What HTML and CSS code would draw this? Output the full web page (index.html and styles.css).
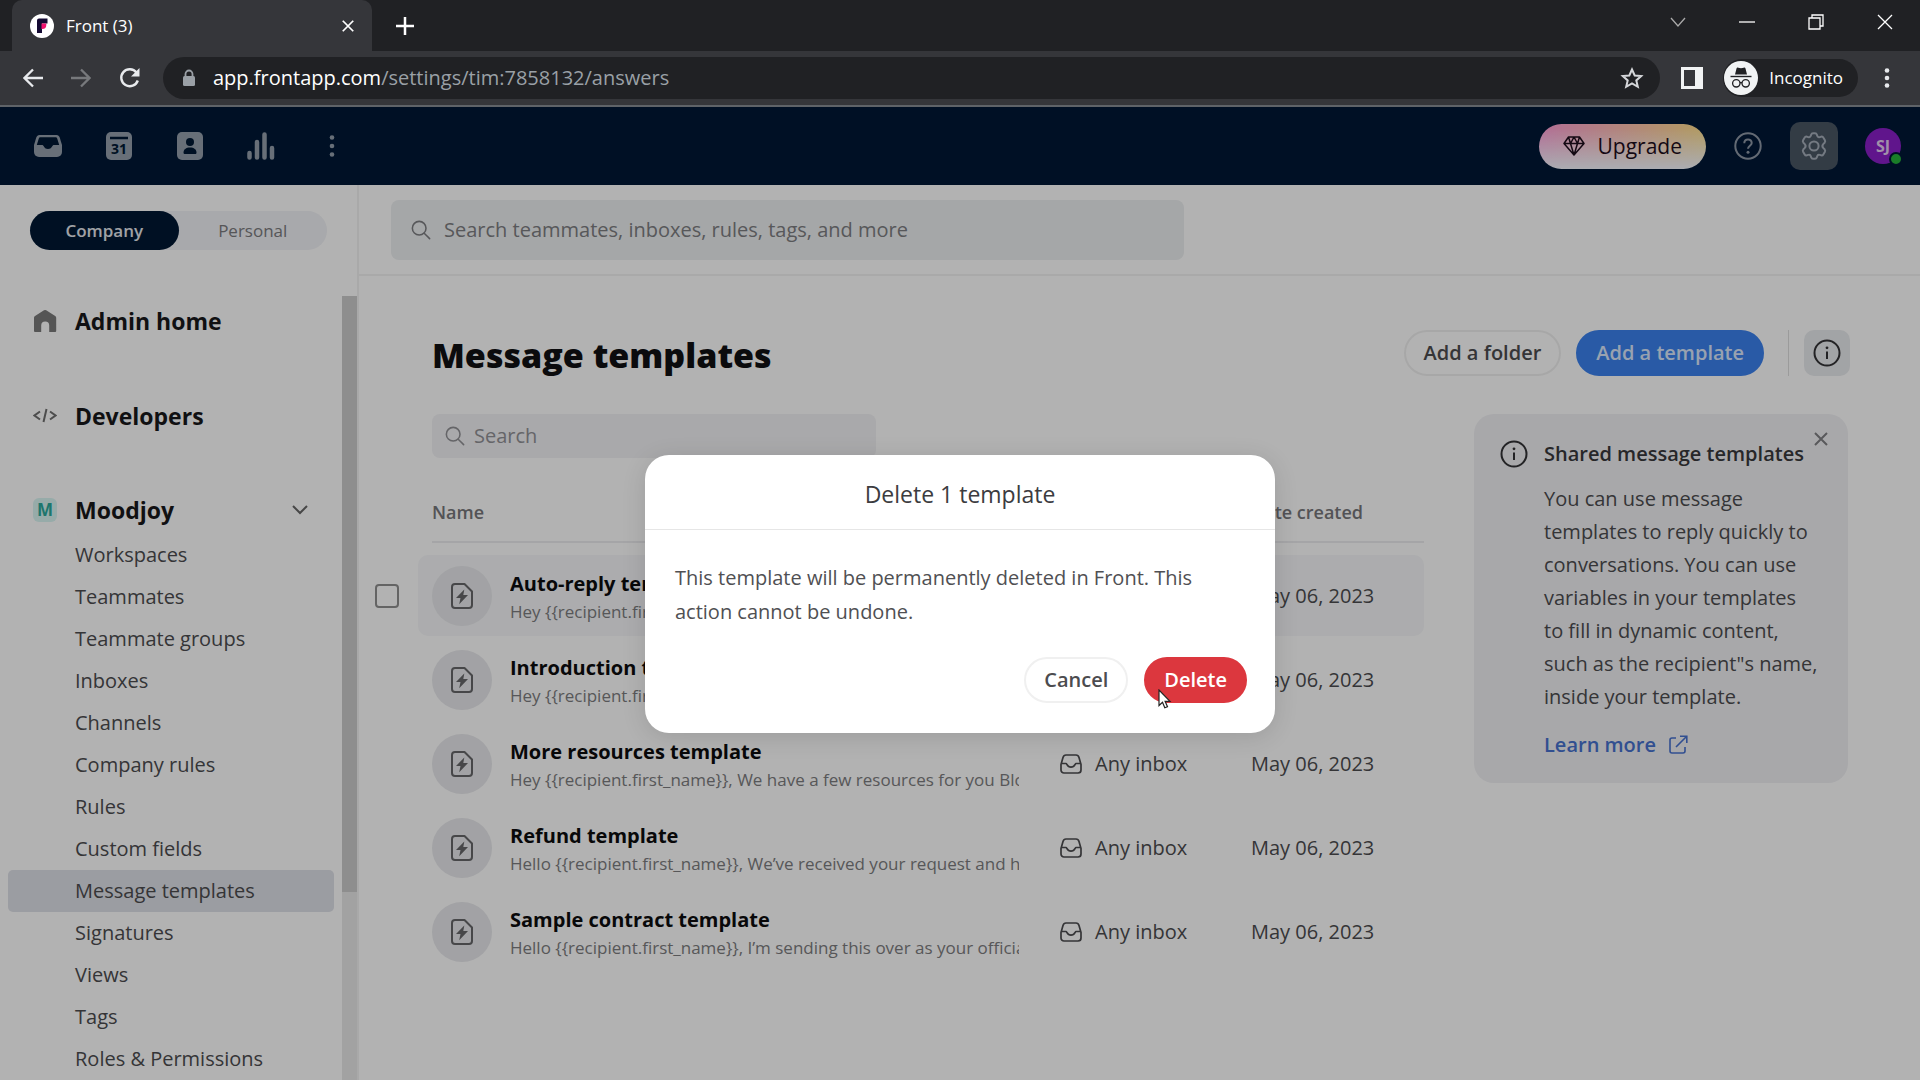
FILE: index.html
```html
<!DOCTYPE html>
<html lang="en">
<head>
<meta charset="utf-8">
<title>Front (3)</title>
<link rel="stylesheet" href="styles.css">
</head>
<body>
<svg class="sprite" aria-hidden="true">
  <symbol id="i-template" viewBox="0 0 24 28"><path d="M5 2h9.500l7.500 7.500V23a3 3 0 0 1-3 3H5a3 3 0 0 1-3-3V5a3 3 0 0 1 3-3z" fill="none" stroke="currentColor" stroke-width="2" stroke-linejoin="round"/><path d="M14.300 7.500 6 16h4.500l-1.300 6.200L18 13h-4.700z" fill="currentColor"/></symbol>
  <symbol id="i-inbox" viewBox="0 0 22 20"><path d="M1 10.500 3 3.400C3.400 2 4.500 1 6 1h10c1.500 0 2.600 1 3 2.400l2 7.100V16a3 3 0 0 1-3 3H4a3 3 0 0 1-3-3zM1.200 9.500H6c1 0 1 3.700 5 3.700s4-3.700 5-3.700h4.800" fill="none" stroke="currentColor" stroke-width="1.700" stroke-linejoin="round"/></symbol>
  <symbol id="i-search" viewBox="0 0 22 22"><circle cx="9" cy="9" r="7.500" fill="none" stroke="currentColor" stroke-width="1.700"/><path d="m14.500 14.500 6 6" stroke="currentColor" stroke-width="1.700" stroke-linecap="round"/></symbol>
  <symbol id="i-info" viewBox="0 0 28 28"><circle cx="14" cy="14" r="12.500" fill="none" stroke="currentColor" stroke-width="2"/><path d="M14 12.500V20" stroke="currentColor" stroke-width="2"/><circle cx="14" cy="8.800" r="1.400" fill="currentColor"/></symbol>
  <symbol id="i-close" viewBox="0 0 16 16"><path d="M2 2l12 12M14 2 2 14" stroke="currentColor" stroke-width="2"/></symbol>
</svg>

<header class="browser">
  <div class="tabs">
    <div class="tab">
      <svg class="favicon" viewBox="0 0 24 24"><circle cx="12" cy="12" r="12" fill="#fff"/><path d="M7 6.500A2 2 0 0 1 9 4.500h8.500v5H12V19H7z" fill="#140a33"/><path d="M11.500 9.500h4.800v1.500a4 4 0 0 1-4 4h-.8z" fill="#f0106e"/></svg>
      <span class="tab-title">Front (3)</span>
      <button class="plain" aria-label="Close tab"><svg width="14" height="14"><use href="#i-close"/></svg></button>
    </div>
    <button class="plain new-tab" aria-label="New tab"><svg width="18" height="18" viewBox="0 0 18 18"><path d="M9 0v18M0 9h18" stroke="#fff" stroke-width="2.500"/></svg></button>
    <div class="window-buttons">
      <button class="plain" aria-label="Search tabs"><svg width="16" height="10" viewBox="0 0 16 10"><path d="m1 1 7 8 7-8" fill="none" stroke="#aaa" stroke-width="1.300"/></svg></button>
      <button class="plain" aria-label="Minimize"><svg width="16" height="16" viewBox="0 0 16 16"><path d="M0 8h16" stroke="#fff" stroke-width="1.300"/></svg></button>
      <button class="plain" aria-label="Restore"><svg width="16" height="16" viewBox="0 0 16 16"><path d="M1 4h11v11H1zM4 4V1h11v11h-3" fill="none" stroke="#fff" stroke-width="1.300"/></svg></button>
      <button class="plain" aria-label="Close window"><svg width="16" height="16" viewBox="0 0 16 16"><path d="m1 1 14 14M15 1 1 15" stroke="#fff" stroke-width="1.300"/></svg></button>
    </div>
  </div>
  <div class="toolbar">
    <div class="nav-buttons">
      <button class="plain" aria-label="Back"><svg width="20" height="20" viewBox="0 0 20 20"><path d="M20 10H2M10 1.500 1.500 10l8.500 8.500" fill="none" stroke="#e8eaed" stroke-width="2.300"/></svg></button>
      <button class="plain" aria-label="Forward"><svg width="20" height="20" viewBox="0 0 20 20"><path d="M0 10h18M10 1.500l8.500 8.500-8.500 8.500" fill="none" stroke="#77797c" stroke-width="2.300"/></svg></button>
      <button class="plain" aria-label="Reload"><svg width="22" height="22" viewBox="0 0 22 22"><path d="M18.800 13.500A8.500 8.500 0 1 1 17.500 5.500" fill="none" stroke="#e8eaed" stroke-width="2.400"/><path d="M20.500 1v8.500H12z" fill="#e8eaed"/></svg></button>
    </div>
    <div class="address">
      <svg width="14" height="18" viewBox="0 0 14 18"><path d="M3.500 8V5a3.500 3.500 0 0 1 7 0v3" fill="none" stroke="#9aa0a6" stroke-width="1.800"/><rect x="1" y="7" width="12" height="10" rx="1.500" fill="#9aa0a6"/></svg>
      <span class="url"><b>app.frontapp.com</b>/settings/tim:7858132/answers</span>
      <svg width="24" height="22" viewBox="0 0 24 22"><path d="m12 2.500 2.700 6 6.500.6-4.900 4.300 1.500 6.400L12 16.400l-5.800 3.400 1.500-6.400-4.900-4.300 6.500-.6z" fill="none" stroke="#d5d7da" stroke-width="2"/></svg>
    </div>
    <svg width="22" height="22" viewBox="0 0 22 22"><path d="M0 0h22v22H0zM3 3v16h11V3z" fill="#f1f3f4" fill-rule="evenodd"/></svg>
    <div class="incognito">
      <svg width="34" height="34" viewBox="0 0 34 34"><circle cx="17" cy="17" r="17" fill="#f1f3f4"/><path d="M12.500 7.500c.3-1 1-1 1.800-.8l2.700.5 2.700-.5c.8-.2 1.500-.2 1.800.8l1.500 6h-12z" fill="#202124"/><path d="M6.500 15.500h21" stroke="#202124" stroke-width="1.400"/><circle cx="12.300" cy="22.300" r="3.700" fill="none" stroke="#202124" stroke-width="1.300"/><circle cx="21.700" cy="22.300" r="3.700" fill="none" stroke="#202124" stroke-width="1.300"/><path d="M16 22q1-1 2 0" fill="none" stroke="#202124" stroke-width="1.300"/></svg>
      <span>Incognito</span>
    </div>
    <button class="plain" aria-label="Menu"><svg width="6" height="20" viewBox="0 0 6 20"><g fill="#e8eaed"><circle cx="3" cy="2.500" r="2.300"/><circle cx="3" cy="10" r="2.300"/><circle cx="3" cy="17.500" r="2.300"/></g></svg></button>
  </div>
</header>

<div class="app">
  <nav class="topnav">
    <div class="apps">
      <a href="#" aria-label="Inbox"><svg width="30" height="28" viewBox="0 0 30 28"><path d="M6.500 3h17c1.600 0 2.700 1 3.200 2.500L29 13v7a5 5 0 0 1-5 5H6a5 5 0 0 1-5-5v-7l2.300-7.500C3.800 4 4.900 3 6.500 3z" fill="#95a0ad"/><path d="M7.300 5.300h15.400c.8 0 1.300.4 1.500 1.100l2 6.600h-5.700c-1.300 0-1.500 4-5.500 4s-4.200-4-5.500-4H3.800l2-6.600c.2-.7.700-1.100 1.500-1.100z" fill="#001833"/></svg></a>
      <a href="#" aria-label="Calendar"><svg width="26" height="28" viewBox="0 0 26 28"><rect width="26" height="28" rx="5" fill="#95a0ad"/><path d="M4 6h18" stroke="#001833" stroke-width="2.500"/><text x="13" y="22" class="cal-day">31</text></svg></a>
      <a href="#" aria-label="Contacts"><svg width="26" height="28" viewBox="0 0 26 28"><rect width="26" height="28" rx="5" fill="#95a0ad"/><circle cx="13" cy="10" r="4" fill="#001833"/><path d="M6.500 20.500c0-3 2.500-5 6.500-5s6.500 2 6.500 5c0 1-.5 1.500-1.500 1.500H8c-1 0-1.500-.5-1.500-1.500z" fill="#001833"/></svg></a>
      <a href="#" aria-label="Analytics"><svg width="28" height="28" viewBox="0 0 28 28"><path d="M2.500 21v4.500M10 10v15.500M17.500 2.500v23M25 16v9.500" stroke="#95a0ad" stroke-width="4.500" stroke-linecap="round"/></svg></a>
      <a href="#" aria-label="More"><svg width="6" height="22" viewBox="0 0 6 22"><g fill="#95a0ad"><circle cx="3" cy="2.500" r="2.300"/><circle cx="3" cy="11" r="2.300"/><circle cx="3" cy="19.500" r="2.300"/></g></svg></a>
    </div>
    <div class="account">
      <button class="upgrade"><svg width="22" height="20" viewBox="0 0 22 20"><path d="M5.500 1h11L21 7.500 11 19 1 7.500zM1 7.500h20M5.500 1l2 6.500L11 19l3.500-11.500 2-6.500M7.500 7.500 11 1l3.500 6.500" fill="none" stroke="#1e0e1c" stroke-width="1.500" stroke-linejoin="round"/></svg>Upgrade</button>
      <a href="#" aria-label="Help"><svg width="28" height="28" viewBox="0 0 28 28"><circle cx="14" cy="14" r="12.700" fill="none" stroke="#8f99a7" stroke-width="2"/><path d="M10.300 11.200C10.300 8.800 12 7.400 14 7.400s3.700 1.400 3.700 3.500c0 2.700-3.700 3-3.700 5.900" fill="none" stroke="#8f99a7" stroke-width="2"/><circle cx="14" cy="20.300" r="1.500" fill="#8f99a7"/></svg></a>
      <a href="#" class="gear" aria-label="Settings"><svg width="30" height="28" viewBox="0 0 30 28"><path d="M12.100 2.800c.3-1 .9-1.500 1.900-1.500h2c1 0 1.600.5 1.900 1.500l.3 1c.3 1 1.400 1.600 2.500 1.300l1.400-.4c1-.3 1.700 0 2.200.9l1.600 2.700c.5.900.4 1.600-.3 2.400l-1.200 1.200a3 3 0 0 0 0 4.200l1.200 1.200c.7.800.8 1.500.3 2.400l-1.600 2.700c-.5.900-1.200 1.200-2.200.9l-1.400-.4c-1.100-.3-2.200.3-2.500 1.300l-.3 1c-.3 1-.9 1.500-1.900 1.500h-2c-1 0-1.600-.5-1.900-1.500l-.3-1c-.3-1-1.400-1.600-2.500-1.300l-1.400.4c-1 .3-1.700 0-2.200-.9l-1.600-2.700c-.5-.9-.4-1.600.3-2.400l1.200-1.200a3 3 0 0 0 0-4.200l-1.200-1.200c-.7-.8-.8-1.500-.3-2.400l1.600-2.700c.5-.9 1.200-1.200 2.200-.9l1.400.4c1.100.3 2.200-.3 2.500-1.300z" fill="none" stroke="#a6afba" stroke-width="2"/><circle cx="15" cy="14" r="4.600" fill="none" stroke="#a6afba" stroke-width="2"/></svg></a>
      <span class="avatar">SJ<i class="online"></i></span>
    </div>
  </nav>

  <div class="columns">
    <aside class="sidebar">
      <div class="toggle"><button class="on">Company</button><button>Personal</button></div>
      <div class="scroller">
        <div class="menu">
          <a href="#" class="section"><svg width="24" height="24" viewBox="0 0 24 24"><path d="M11 1.300a2 2 0 0 1 2.200 0l9 5.700a2 2 0 0 1 1 1.700V22a1 1 0 0 1-1 1h-6v-6.500a4 4 0 0 0-8 0V23H2a1 1 0 0 1-1-1V8.700A2 2 0 0 1 2 7z" fill="#7a7a7a"/></svg>Admin home</a>
          <a href="#" class="section"><svg width="24" height="16" viewBox="0 0 24 16"><path d="M7 3.500 1.500 7.500 7 11.500M17 3.500l5.500 4-5.500 4M13.500 1l-3 13" fill="none" stroke="#6f6f6f" stroke-width="2"/></svg>Developers</a>
          <a href="#" class="section"><span class="company">M</span>Moodjoy<svg class="chevron" width="16" height="10" viewBox="0 0 16 10"><path d="m1 1 7 7 7-7" fill="none" stroke="#666" stroke-width="2"/></svg></a>
          <ul>
            <li><a href="#">Workspaces</a></li>
            <li><a href="#">Teammates</a></li>
            <li><a href="#">Teammate groups</a></li>
            <li><a href="#">Inboxes</a></li>
            <li><a href="#">Channels</a></li>
            <li><a href="#">Company rules</a></li>
            <li><a href="#">Rules</a></li>
            <li><a href="#">Custom fields</a></li>
            <li><a href="#" class="current">Message templates</a></li>
            <li><a href="#">Signatures</a></li>
            <li><a href="#">Views</a></li>
            <li><a href="#">Tags</a></li>
            <li><a href="#">Roles &amp; Permissions</a></li>
          </ul>
        </div>
        <div class="track"><div class="thumb"></div></div>
      </div>
    </aside>

    <main class="main">
      <div class="global-search">
        <label class="field"><svg width="20" height="20"><use href="#i-search"/></svg><input type="text" aria-label="Search settings" placeholder="Search teammates, inboxes, rules, tags, and more"></label>
      </div>
      <div class="heading">
        <h1>Message templates</h1>
        <div class="actions">
          <button class="pill">Add a folder</button>
          <button class="pill primary">Add a template</button>
          <span class="divider"></span>
          <button class="info-button" aria-label="About templates"><svg width="28" height="28"><use href="#i-info"/></svg></button>
        </div>
      </div>
      <div class="content">
        <section class="list">
          <label class="field small"><svg width="20" height="20"><use href="#i-search"/></svg><input type="text" aria-label="Search templates" placeholder="Search"></label>
          <table>
            <colgroup><col class="c-check"><col><col class="c-inbox"><col class="c-date"></colgroup>
            <thead><tr><td></td><th>Name</th><th></th><th>Date created</th></tr></thead>
            <tbody>
              <tr class="hover"><td><input type="checkbox" aria-label="Select Auto-reply template"></td><td><div class="item"><span class="disc"><svg width="24" height="28"><use href="#i-template"/></svg></span><div class="words"><strong>Auto-reply template</strong><p>Hey {{recipient.first_name}}</p></div></div></td><td></td><td>May 06, 2023</td></tr>
              <tr><td></td><td><div class="item"><span class="disc"><svg width="24" height="28"><use href="#i-template"/></svg></span><div class="words"><strong>Introduction template</strong><p>Hey {{recipient.first_name}}</p></div></div></td><td></td><td>May 06, 2023</td></tr>
              <tr><td></td><td><div class="item"><span class="disc"><svg width="24" height="28"><use href="#i-template"/></svg></span><div class="words"><strong>More resources template</strong><p>Hey {{recipient.first_name}}, We have a few resources for you Blog</p></div></div></td><td><span class="inbox"><svg width="22" height="20"><use href="#i-inbox"/></svg>Any inbox</span></td><td>May 06, 2023</td></tr>
              <tr><td></td><td><div class="item"><span class="disc"><svg width="24" height="28"><use href="#i-template"/></svg></span><div class="words"><strong>Refund template</strong><p>Hello {{recipient.first_name}}, We’ve received your request and have</p></div></div></td><td><span class="inbox"><svg width="22" height="20"><use href="#i-inbox"/></svg>Any inbox</span></td><td>May 06, 2023</td></tr>
              <tr><td></td><td><div class="item"><span class="disc"><svg width="24" height="28"><use href="#i-template"/></svg></span><div class="words"><strong>Sample contract template</strong><p>Hello {{recipient.first_name}}, I’m sending this over as your official</p></div></div></td><td><span class="inbox"><svg width="22" height="20"><use href="#i-inbox"/></svg>Any inbox</span></td><td>May 06, 2023</td></tr>
            </tbody>
          </table>
        </section>
        <aside class="tip">
          <svg class="tip-icon" width="28" height="28"><use href="#i-info"/></svg>
          <div class="tip-text">
            <h2>Shared message templates</h2>
            <p>You can use message templates to reply quickly to conversations. You can use variables in your templates to fill in dynamic content, such as the recipient"s name, inside your template.</p>
            <a href="#">Learn more <svg width="20" height="20" viewBox="0 0 20 20"><path d="M8 3H4a2 2 0 0 0-2 2v11a2 2 0 0 0 2 2h11a2 2 0 0 0 2-2v-4M8 12 18.500 1.500M12 1.200h6.800V8" fill="none" stroke="currentColor" stroke-width="1.600"/></svg></a>
          </div>
          <button class="plain tip-close" aria-label="Dismiss"><svg width="16" height="16"><use href="#i-close"/></svg></button>
        </aside>
      </div>
    </main>
  </div>

  <div class="overlay">
    <div class="dialog" role="dialog" aria-labelledby="dialog-title">
      <h2 id="dialog-title">Delete 1 template</h2>
      <div class="dialog-body">
        <p>This template will be permanently deleted in Front. This action cannot be undone.</p>
        <div class="dialog-buttons">
          <button class="pill">Cancel</button>
          <button class="pill danger">Delete<svg class="cursor" width="14" height="20" viewBox="0 0 14 20"><path d="M1 1v15.500l3.500-3.300 2.300 5.600 2.700-1.100-2.400-5.400H12z" fill="#fff" stroke="#222" stroke-width="1.200"/></svg></button>
        </div>
      </div>
    </div>
  </div>
</div>
</body>
</html>
```

FILE: styles.css
```css
* { box-sizing: border-box; }
body, h1, h2, p, ul { margin: 0; padding: 0; }
body {
  display: flex;
  flex-direction: column;
  height: 100vh;
  overflow: hidden;
  font-family: "Open Sans", "Noto Sans", sans-serif;
  font-size: 20px;
  line-height: 24px;
  color: #4c4c4f;
}
button, input { font: inherit; color: inherit; }
button { border: 0; padding: 0; background: none; }
a { color: inherit; text-decoration: none; }
svg { flex: none; display: block; }
.sprite { position: absolute; width: 0; height: 0; }
.plain { display: flex; align-items: center; justify-content: center; }

/* Browser window */
.browser { flex: none; background: #35363a; border-bottom: 2px solid #5f6368; color: #fff; }
.tabs { display: flex; height: 51px; background: #202124; padding-left: 12px; }
.tab {
  display: flex;
  align-items: center;
  width: 360px;
  padding: 0 17px 0 18px;
  gap: 12px;
  background: #35363a;
  border-radius: 10px 10px 0 0;
}
.favicon { width: 24px; height: 24px; }
.tab-title { flex: 1; font-size: 17px; }
.new-tab { margin-left: 24px; }
.window-buttons { display: flex; margin: 0 27px 8px auto; gap: 53px; }
.toolbar { display: flex; align-items: center; height: 54px; padding: 0 30px 0 23px; }
.nav-buttons { display: flex; gap: 28px; width: 140px; }
.address {
  flex: 1;
  display: flex;
  align-items: center;
  height: 42px;
  padding: 0 16px 0 19px;
  margin-right: 21px;
  gap: 17px;
  border-radius: 21px;
  background: #202124;
}
.url { flex: 1; color: #9aa0a6; }
.url b { font-weight: 400; color: #fff; }
.incognito {
  display: flex;
  align-items: center;
  gap: 11px;
  height: 38px;
  margin: 0 26px 0 20px;
  padding: 0 15px 0 1px;
  border-radius: 19px;
  background: #202124;
  font-size: 17px;
}

/* App header */
.app { position: relative; flex: 1; min-height: 0; display: flex; flex-direction: column; background: #fff; }
.topnav { flex: none; display: flex; justify-content: space-between; align-items: center; height: 78px; padding: 0 19px 0 33px; background: #001836; }
.apps { display: flex; align-items: center; gap: 41px; }
.apps a { display: flex; justify-content: center; width: 30px; }
.cal-day { font-size: 14px; font-weight: 700; fill: #001833; text-anchor: middle; }
.account { display: flex; align-items: center; }
.upgrade {
  display: flex;
  align-items: center;
  gap: 13px;
  height: 45px;
  padding: 0 24px;
  margin-right: 28px;
  border-radius: 23px;
  font-size: 21px;
  color: #1e0e1c;
  background: linear-gradient(to top, #f5f7ff, #f5f7ff00 90%), linear-gradient(90deg, #ff9fd8, #ffe08c);
}
.gear { display: flex; align-items: center; justify-content: center; width: 48px; height: 48px; margin: 0 27px 0 28px; border-radius: 10px; background: #4a5664; }
.avatar { position: relative; width: 36px; height: 36px; border-radius: 50%; background: #8a1fc9; color: #e6cff2; font-size: 16px; font-weight: 700; line-height: 36px; text-align: center; }
.online { position: absolute; right: -2px; bottom: -2px; width: 14px; height: 14px; border: 2px solid #001836; border-radius: 50%; background: #26b33a; }

/* Sidebar */
.columns { flex: 1; min-height: 0; display: flex; }
.sidebar { flex: none; display: flex; flex-direction: column; width: 359px; padding-top: 26px; border-right: 2px solid #f2f2f2; }
.toggle { display: flex; height: 39px; margin: 0 30px; border-radius: 20px; background: #f1f2f6; font-size: 17px; color: #7b7b7f; }
.toggle button { flex: 1; }
.toggle .on { border-radius: 20px; background: #001833; color: #e6e9ee; font-weight: 600; }
.scroller { flex: 1; min-height: 0; display: flex; margin-top: 46px; overflow: hidden; }
.menu { flex: 1; padding: 0 8px; }
.track { width: 15px; background: #e8e8e8; }
.thumb { height: 76%; background: #cccccc; }
.section {
  display: flex;
  align-items: center;
  height: 50px;
  margin-bottom: 45px;
  padding: 0 26px 0 25px;
  gap: 18px;
  font-size: 23px;
  font-weight: 700;
  color: #18181a;
}
.section:nth-of-type(3) { margin-bottom: 0; height: 48px; }
.company { width: 24px; height: 24px; border-radius: 6px; background: #d8f5f3; color: #2ba99c; font-size: 17px; text-align: center; }
.chevron { margin-left: auto; }
.menu ul { list-style: none; }
.menu li a { display: block; padding-left: 67px; line-height: 42px; border-radius: 5px; }
.menu .current { background: #dfe1e8; }

/* Main area */
.main { flex: 1; min-width: 0; }
.global-search { height: 91px; padding: 15px 32px; border-bottom: 2px solid #f2f2f2; }
.field { display: flex; align-items: center; gap: 13px; width: 53%; height: 60px; padding: 0 20px; border-radius: 8px; background: #edeff1; color: #7d7e82; }
.field input { flex: 1; min-width: 0; padding: 0; border: 0; outline: 0; background: none; }
.field input::placeholder { color: inherit; opacity: 1; }
.heading { display: flex; align-items: center; justify-content: space-between; padding: 54px 70px 38px 73px; }
h1 { padding-top: 4px; font-size: 34px; line-height: 42px; font-weight: 800; color: #111113; }
.actions { display: flex; align-items: center; }
.pill { position: relative; height: 46px; padding: 0 18px; border: 2px solid #f0f0f0; border-radius: 23px; font-weight: 600; }
.actions .pill { margin-right: 15px; }
.primary { background: #3c82ee; border-color: #3c82ee; color: #dbe8fc; }
.divider { width: 1px; height: 46px; margin: 0 15px 0 9px; background: #dedede; }
.info-button { display: flex; align-items: center; justify-content: center; width: 46px; height: 46px; border-radius: 10px; background: #e9ebee; color: #333336; }
.content { display: flex; align-items: flex-start; gap: 50px; padding-right: 72px; }
.list { flex: 1; min-width: 0; }
.small { width: auto; max-width: 444px; height: 44px; margin: 0 0 21px 73px; padding: 0 13px; gap: 9px; background: #f2f2f5; color: #919195; }

table { width: 100%; table-layout: fixed; border-spacing: 0 3px; }
.c-check { width: 59px; }
.c-inbox { width: 191px; }
.c-date { width: 173px; }
th, td { padding: 0; text-align: left; }
th { padding: 18px 0 28px; font-size: 18px; font-weight: 600; color: #77777b; background: linear-gradient(#ededef, #ededef) no-repeat 0 59px / 100% 2px; }
th:nth-child(2) { padding-left: 14px; background-position-x: 14px; }
tbody td { height: 81px; }
.hover td:nth-child(n+2) { background: #f6f7f9; }
.hover td:nth-child(2) { border-radius: 10px 0 0 10px; }
.hover td:last-child { border-radius: 0 10px 10px 0; }
input[type="checkbox"] { appearance: none; display: block; width: 24px; height: 24px; margin: 0 0 0 16px; border: 2px solid #909090; border-radius: 4px; }
.item { display: flex; align-items: center; gap: 18px; padding: 0 41px 0 14px; }
.disc { flex: none; display: flex; align-items: center; justify-content: center; width: 60px; height: 60px; border-radius: 50%; background: #e8e9ec; color: #666669; }
.words { min-width: 0; padding-top: 3px; white-space: nowrap; overflow: hidden; }
.words strong { display: block; line-height: 28px; font-weight: 700; color: #0c0c0e; }
.words p { font-size: 17px; line-height: 27px; color: #7d7d80; }
.inbox { display: flex; align-items: center; gap: 13px; }

.tip { position: relative; flex: none; display: flex; gap: 16px; width: 374px; padding: 24px 30px 22px 26px; border-radius: 20px; background: #f1f1f4; }
.tip-icon { margin-top: 2px; color: #333336; }
.tip-text { flex: 1; min-width: 0; }
.tip h2 { font-size: 20px; line-height: 32px; font-weight: 600; color: #38383b; white-space: nowrap; }
.tip p { margin: 12px 0 16px; line-height: 33px; }
.tip a { display: flex; gap: 12px; align-items: center; line-height: 32px; font-weight: 600; color: #4771cf; }
.tip-close { position: absolute; top: 17px; right: 19px; color: #808083; }

/* Confirmation dialog */
.overlay { position: absolute; inset: 0; display: flex; align-items: center; justify-content: center; background: rgba(0, 0, 0, 0.3); }
.dialog { width: 630px; border-radius: 24px; background: #fff; box-shadow: 0 4px 24px rgba(0, 0, 0, 0.12); }
.dialog h2 { padding: 24px 0 20px; border-bottom: 1px solid #e6e6e6; font-size: 23px; line-height: 30px; font-weight: 500; text-align: center; color: #3c3c3f; }
.dialog-body { padding: 31px 28px 30px 30px; }
.dialog-body p { line-height: 34px; color: #505053; }
.dialog-buttons { display: flex; justify-content: flex-end; gap: 16px; margin-top: 28px; }
.danger { background: #dc373e; border-color: #dc373e; color: #fff; }
.cursor { position: absolute; left: 12px; top: 30px; }
```
